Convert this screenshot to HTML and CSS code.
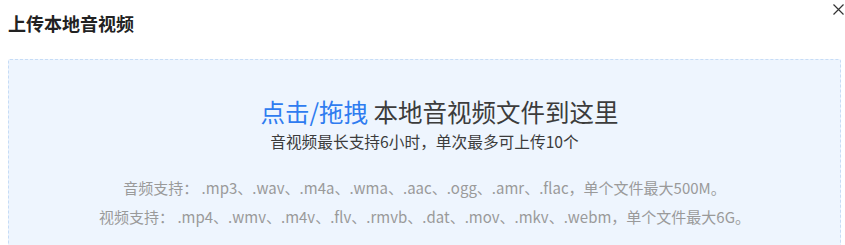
FILE: index.html
```html
<!DOCTYPE html>
<html lang="zh-CN">
<head>
  <meta charset="UTF-8" />
  <meta name="viewport" content="width=device-width, initial-scale=1" />
  <title>上传本地音视频</title>
  <link rel="stylesheet" href="styles.css">
</head>
<body>

<div class="dialog">
  <div class="dialog-header">
    <h2 class="dialog-title">上传本地音视频</h2>
    <button class="close-btn" aria-label="关闭">
      <svg width="11" height="11" viewBox="0 0 11 11">
        <path d="M0.5 0.5 L10.5 10.5 M10.5 0.5 L0.5 10.5" stroke="#333" stroke-width="1.2" fill="none" />
      </svg>
    </button>
  </div>

  <div class="dropzone" id="dropzone">
    <p class="drop-main"><span class="drop-link">点击/拖拽</span> 本地音视频文件到这里</p>
    <p class="drop-limit">音视频最长支持6小时，单次最多可上传10个</p>
    <p class="drop-format">音频支持： .mp3、.wav、.m4a、.wma、.aac、.ogg、.amr、.flac，单个文件最大500M。</p>
    <p class="drop-format">视频支持： .mp4、.wmv、.m4v、.flv、.rmvb、.dat、.mov、.mkv、.webm，单个文件最大6G。</p>
  </div>
</div>

</body>
</html>
```

FILE: styles.css
```css
:root {
  --blue: #2f7cf0;
  --text-dark: #222;
  --text-mid: #3c3c3c;
  --text-light: #9a9a9a;
  --drop-bg: #eef5fe;
  --drop-border: #c6dcf6;
}

* {
  box-sizing: border-box;
  margin: 0;
  padding: 0;
}

body {
  background: #fff;
  font-family: "Noto Sans CJK SC", "Noto Sans", sans-serif;
  color: var(--text-dark);
}

.dialog {
  position: relative;
  padding: 8px 4px 8px 8px;
}

.dialog-header {
  height: 51px;
}

.dialog-title {
  font-size: 18px;
  font-weight: bold;
  line-height: 30px;
  color: var(--text-dark);
}

.close-btn {
  position: absolute;
  top: 3px;
  right: 1px;
  width: 12px;
  height: 12px;
  border: none;
  background: none;
  cursor: pointer;
  display: flex;
  align-items: center;
  justify-content: center;
}

.dropzone {
  height: 200px;
  background: var(--drop-bg);
  border: 1px dashed var(--drop-border);
  border-radius: 2px;
  padding-top: 36px;
  text-align: center;
  cursor: pointer;
}

.drop-main {
  padding-left: 30px;
  font-size: 24.5px;
  line-height: 32px;
  color: var(--text-mid);
}

.drop-link {
  color: var(--blue);
}

.drop-limit {
  margin-top: 3px;
  font-size: 15.7px;
  line-height: 22px;
  color: var(--text-mid);
}

.drop-format {
  font-size: 15px;
  line-height: 29px;
  color: var(--text-light);
}

.drop-limit + .drop-format {
  margin-top: 20px;
}
```
